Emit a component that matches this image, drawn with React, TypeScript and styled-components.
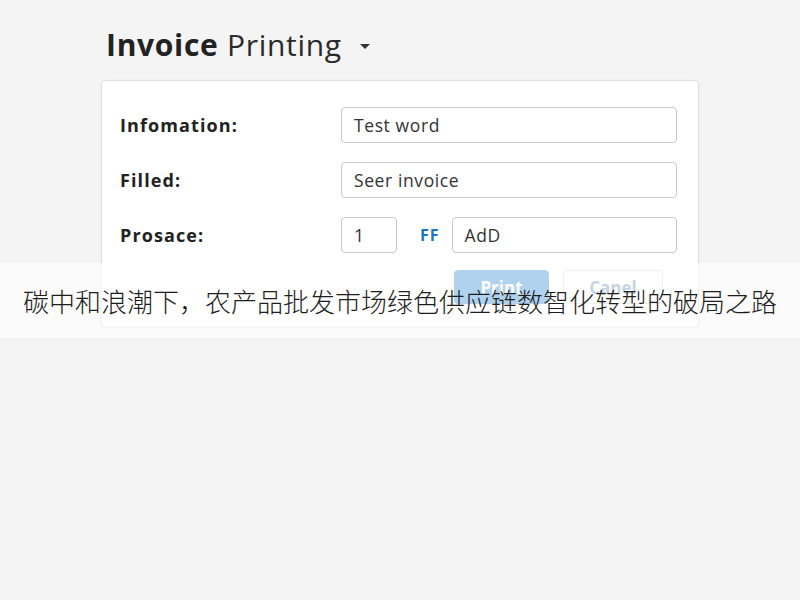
import styled, { createGlobalStyle } from "styled-components";

const GlobalStyle = createGlobalStyle`
  html, body {
    margin: 0;
    padding: 0;
    background-color: #f4f4f4;
    font-family: "Open Sans", "Noto Sans", "Noto Sans CJK SC", sans-serif;
  }
`;

const Page = styled.div`
  position: relative;
  width: 800px;
  height: 600px;
  overflow: hidden;
  padding: 26px 101px 0 101px;
  box-sizing: border-box;
`;

const Title = styled.h1`
  margin: 0 0 16px 5px;
  font-size: 30px;
  font-weight: 400;
  letter-spacing: 0.7px;
  color: #2a2a2a;
  display: flex;
  align-items: center;
  line-height: 38px;
  b {
    font-weight: 700;
    color: #222;
  }
`;

const Caret = styled.span`
  display: inline-block;
  width: 0;
  height: 0;
  margin-left: 18px;
  margin-top: 2px;
  border-left: 5px solid transparent;
  border-right: 5px solid transparent;
  border-top: 5px solid #333;
`;

const Card = styled.div`
  width: 598px;
  box-sizing: border-box;
  background-color: #fff;
  border: 1px solid #e0e0e0;
  border-radius: 4px;
  box-shadow: 0 1px 3px rgba(0, 0, 0, 0.06);
  padding: 26px 21px 22px 18px;
  display: flex;
  flex-direction: column;
  gap: 19px;
`;

const Row = styled.div`
  display: grid;
  grid-template-columns: 221px 1fr;
  align-items: center;
`;

const Label = styled.label`
  font-size: 18px;
  font-weight: 700;
  letter-spacing: 1.1px;
  color: #222;
`;

const Fields = styled.div`
  display: flex;
  align-items: center;
`;

const Input = styled.div<{ $width?: number }>`
  height: 36px;
  box-sizing: border-box;
  ${(p) => (p.$width ? `width: ${p.$width}px;` : "flex: 1;")}
  border: 1px solid #c9c9c9;
  border-radius: 4px;
  padding: 0 12px;
  display: flex;
  align-items: center;
  font-size: 17.5px;
  letter-spacing: 0.6px;
  color: #333;
  background: #fff;
`;

const Unit = styled.span`
  font-size: 16px;
  font-weight: 700;
  letter-spacing: 1px;
  color: #1b74c2;
  margin: 0 12px 0 23px;
`;

const Actions = styled.div`
  display: flex;
  gap: 14px;
  padding-left: 334px;
  margin-top: -2px;
`;

const Button = styled.button<{ $primary?: boolean }>`
  width: ${(p) => (p.$primary ? 95 : 100)}px;
  height: 34px;
  border-radius: 4px;
  font-family: "Open Sans", sans-serif;
  font-size: 17px;
  font-weight: 700;
  border: 1px solid ${(p) => (p.$primary ? "#3a8ed6" : "#d6d6d6")};
  background-color: ${(p) => (p.$primary ? "#3a8ed6" : "#fff")};
  color: ${(p) => (p.$primary ? "#fff" : "#6f93b8")};
`;

const Banner = styled.div`
  position: absolute;
  left: 0;
  right: 0;
  top: 263px;
  height: 75px;
  background-color: rgba(255, 255, 255, 0.6);
  display: flex;
  align-items: center;
  justify-content: center;
  font-family: "Noto Sans CJK SC", "Noto Sans", sans-serif;
  font-size: 26px;
  font-weight: 300;
  color: #1e1e1e;
  white-space: nowrap;
`;

export default function App() {
  return (
    <>
      <GlobalStyle />
      <Page>
        <Title>
          <span>
            <b>Invoice</b> Printing
          </span>
          <Caret />
        </Title>
        <Card>
          <Row>
            <Label>Infomation:</Label>
            <Fields>
              <Input>Test word</Input>
            </Fields>
          </Row>
          <Row>
            <Label>Filled:</Label>
            <Fields>
              <Input>Seer invoice</Input>
            </Fields>
          </Row>
          <Row>
            <Label>Prosace:</Label>
            <Fields>
              <Input $width={56}>1</Input>
              <Unit>FF</Unit>
              <Input>AdD</Input>
            </Fields>
          </Row>
          <Actions>
            <Button $primary>Print</Button>
            <Button>Canel</Button>
          </Actions>
        </Card>
        <Banner>碳中和浪潮下，农产品批发市场绿色供应链数智化转型的破局之路</Banner>
      </Page>
    </>
  );
}
